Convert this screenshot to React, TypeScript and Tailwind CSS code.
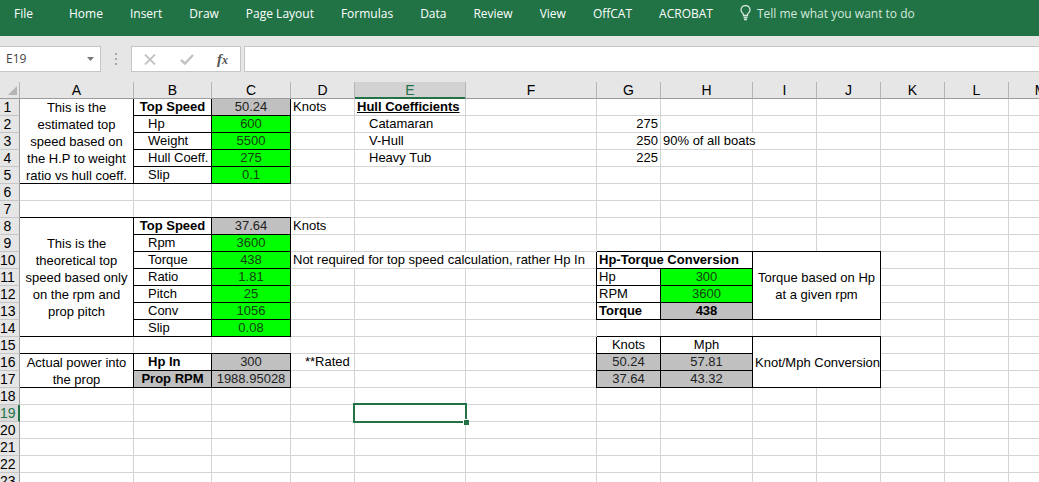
import { Fragment } from 'react';
import clsx from 'clsx';

type Cell = {
  v?: string;
  cls?: string;
  cols?: number;
  rows?: number;
};

const TABS = ['File', 'Home', 'Insert', 'Draw', 'Page Layout', 'Formulas', 'Data', 'Review', 'View', 'OffCAT', 'ACROBAT'];

const COLS = [
  { name: 'A', w: 'w-[114px]' },
  { name: 'B', w: 'w-[78px]' },
  { name: 'C', w: 'w-[79px]' },
  { name: 'D', w: 'w-[64px]' },
  { name: 'E', w: 'w-[111px]' },
  { name: 'F', w: 'w-[131px]' },
  { name: 'G', w: 'w-[64px]' },
  { name: 'H', w: 'w-[92px]' },
  { name: 'I', w: 'w-[64px]' },
  { name: 'J', w: 'w-[64px]' },
  { name: 'K', w: 'w-[64px]' },
  { name: 'L', w: 'w-[64px]' },
  { name: 'M', w: 'w-[64px]' },
];

const ROW_COUNT = 23;
const ACTIVE = { col: 'E', row: 19 };

const indent = 'pl-[14px]';
const center = 'text-center';
const bold = 'text-center font-bold';
const input = 'bg-[#00ff00] text-center text-[#14400f]';
const result = 'bg-[#c0c0c0] text-center text-[#222]';
const note = 'text-center whitespace-normal leading-[17px] align-middle';

const CELLS: Record<string, Cell> = {
  A1: { v: 'This is the estimated top speed based on the H.P to weight ratio vs hull coeff.', cls: note, rows: 5 },
  B1: { v: 'Top Speed', cls: bold },
  C1: { v: '50.24', cls: result },
  D1: { v: 'Knots' },
  E1: { v: 'Hull Coefficients', cls: 'font-bold underline' },
  B2: { v: 'Hp', cls: indent },
  C2: { v: '600', cls: input },
  E2: { v: 'Catamaran', cls: indent },
  G2: { v: '275', cls: 'text-right' },
  B3: { v: 'Weight', cls: indent },
  C3: { v: '5500', cls: input },
  E3: { v: 'V-Hull', cls: indent },
  G3: { v: '250', cls: 'text-right' },
  H3: { v: '90% of all boats', cols: 2 },
  B4: { v: 'Hull Coeff.', cls: indent },
  C4: { v: '275', cls: input },
  E4: { v: 'Heavy Tub', cls: indent },
  G4: { v: '225', cls: 'text-right' },
  B5: { v: 'Slip', cls: indent },
  C5: { v: '0.1', cls: input },

  A8: { v: 'This is the theoretical top speed based only on the rpm and prop pitch', cls: note, rows: 7 },
  B8: { v: 'Top Speed', cls: bold },
  C8: { v: '37.64', cls: result },
  D8: { v: 'Knots' },
  B9: { v: 'Rpm', cls: indent },
  C9: { v: '3600', cls: input },
  B10: { v: 'Torque', cls: indent },
  C10: { v: '438', cls: input },
  D10: { v: 'Not required for top speed calculation, rather Hp In', cols: 3 },
  B11: { v: 'Ratio', cls: indent },
  C11: { v: '1.81', cls: input },
  B12: { v: 'Pitch', cls: indent },
  C12: { v: '25', cls: input },
  B13: { v: 'Conv', cls: indent },
  C13: { v: '1056', cls: input },
  B14: { v: 'Slip', cls: indent },
  C14: { v: '0.08', cls: input },

  G10: { v: 'Hp-Torque Conversion', cls: 'font-bold', cols: 2 },
  I10: { v: 'Torque based on Hp at a given rpm', cls: note, cols: 2, rows: 4 },
  G11: { v: 'Hp' },
  H11: { v: '300', cls: input },
  G12: { v: 'RPM' },
  H12: { v: '3600', cls: input },
  G13: { v: 'Torque', cls: 'font-bold' },
  H13: { v: '438', cls: 'bg-[#c0c0c0] text-center font-bold' },

  G15: { v: 'Knots', cls: center },
  H15: { v: 'Mph', cls: center },
  I15: { v: 'Knot/Mph Conversion', cls: 'text-center align-middle', cols: 2, rows: 3 },
  G16: { v: '50.24', cls: result },
  H16: { v: '57.81', cls: result },
  G17: { v: '37.64', cls: result },
  H17: { v: '43.32', cls: result },

  A16: { v: 'Actual power into the prop', cls: note, rows: 2 },
  B16: { v: 'Hp In', cls: 'pl-[14px] font-bold' },
  C16: { v: '300', cls: result },
  D16: { v: '**Rated', cls: indent },
  B17: { v: 'Prop RPM', cls: 'bg-[#c0c0c0] text-center font-bold' },
  C17: { v: '1988.95028', cls: result },
};

// outlined blocks: every cell inside gets a black right and bottom edge
const BLOCKS = [
  { from: 'A', to: 'C', top: 1, bottom: 5 },
  { from: 'A', to: 'C', top: 8, bottom: 14 },
  { from: 'A', to: 'C', top: 16, bottom: 17 },
  { from: 'G', to: 'J', top: 10, bottom: 13 },
  { from: 'G', to: 'J', top: 15, bottom: 17 },
];

// inset shadows instead of borders, so black always wins in the corners
function edges(col: string, row: number, span: number) {
  const last = col.charCodeAt(0) + span - 1;
  let right = false;
  let bottom = false;
  for (const b of BLOCKS) {
    const inRows = row >= b.top && row <= b.bottom;
    const inCols = col >= b.from && col <= b.to;
    if (inRows && inCols) {
      right = true;
      bottom = true;
    }
    // neighbours draw the left and top edge of the block
    if (inRows && last + 1 === b.from.charCodeAt(0)) right = true;
    if (inCols && row + 1 === b.top) bottom = true;
  }
  if (right && bottom) return 'shadow-[inset_-1px_-1px_0_#000]';
  if (right) return 'shadow-[inset_-1px_0_0_#000,inset_0_-1px_0_#d4d4d4]';
  if (bottom) return 'shadow-[inset_0_-1px_0_#000,inset_-1px_0_0_#d4d4d4]';
  return 'shadow-[inset_-1px_-1px_0_#d4d4d4]';
}

// addresses swallowed by merged cells
const covered = new Set<string>();
Object.entries(CELLS).forEach(([addr, cell]) => {
  const c0 = addr.charCodeAt(0);
  const r0 = Number(addr.slice(1));
  for (let r = 0; r < (cell.rows ?? 1); r++) {
    for (let c = 0; c < (cell.cols ?? 1); c++) {
      if (r || c) covered.add(String.fromCharCode(c0 + c) + (r0 + r));
    }
  }
});

function Ribbon() {
  return (
    <nav className="flex h-9 items-start bg-[#217346] pt-[5px] pl-[14px] font-['Open_Sans',sans-serif] text-[12px] leading-[18px] whitespace-nowrap text-white">
      {TABS.map((tab) => (
        <button key={tab} type="button" className={tab === 'File' ? 'mr-9' : 'mr-[27px]'}>
          {tab}
        </button>
      ))}
      <button type="button" className="flex items-start gap-1.5 text-[#d5e8dc]">
        <svg width="11" height="16" viewBox="0 0 11 16" fill="none" stroke="currentColor" strokeWidth="1.3">
          <path d="M3.5 10.5V9.2C2 8 1 6.800 1 5a4.500 4.500 0 0 1 9 0c0 1.800-1 3-2.500 4.200v1.300zM3.500 12.500h4M4 14.500h3" />
        </svg>
        Tell me what you want to do
      </button>
    </nav>
  );
}

function FormulaBar() {
  return (
    <div className="flex h-9 items-end gap-[3px] bg-[#e6e6e6] font-['Open_Sans',sans-serif] text-[12px] text-[#444]">
      <div className="flex h-[26px] w-[101px] items-center border border-l-0 border-[#c6c6c6] bg-white">
        <input aria-label="Name Box" defaultValue="E19" className="w-0 flex-1 pl-1.5 outline-none" />
        <button type="button" aria-label="Open name list" className="px-1.5">
          <svg width="7" height="4" viewBox="0 0 7 4" fill="#777">
            <path d="M0 0h7L3.500 4z" />
          </svg>
        </button>
      </div>
      <div className="flex h-[26px] w-6 flex-col items-center justify-center gap-[3px]">
        <span className="size-[2px] bg-[#a6a6a6]" />
        <span className="size-[2px] bg-[#a6a6a6]" />
        <span className="size-[2px] bg-[#a6a6a6]" />
      </div>
      <div className="flex h-[26px] w-[110px] items-center justify-between border border-[#c6c6c6] bg-white px-3">
        <button type="button" aria-label="Cancel">
          <svg width="12" height="11" viewBox="0 0 12 11" stroke="#c2c2c2" strokeWidth="1.8">
            <path d="M1 .5l10 10M11 .5l-10 10" />
          </svg>
        </button>
        <button type="button" aria-label="Enter">
          <svg width="14" height="11" viewBox="0 0 14 11" fill="none" stroke="#c2c2c2" strokeWidth="2.400">
            <path d="M1 6l4 3.500L13 1" />
          </svg>
        </button>
        <button type="button" aria-label="Insert Function" className="font-['Liberation_Serif',serif] text-[15px] leading-4 font-bold text-[#555] italic">
          f<span className="text-[12px]">x</span>
        </button>
      </div>
      <input aria-label="Formula Bar" className="h-[26px] min-w-0 flex-1 border border-r-0 border-[#c6c6c6] bg-white px-1.5 outline-none" />
    </div>
  );
}

function Sheet() {
  return (
    <div className="overflow-hidden bg-[#e6e6e6] pt-[10px]">
      <table className="w-[1073px] table-fixed border-separate border-spacing-0 font-['Liberation_Sans',Arial,sans-serif] text-[13px] leading-4 whitespace-nowrap text-black">
        <colgroup>
          <col className="w-5" />
          {COLS.map((c) => (
            <col key={c.name} className={c.w} />
          ))}
        </colgroup>
        <thead>
          <tr className="h-[17px] text-[14px]">
            <td className="border-r border-b border-r-[#b5b5b5] border-b-[#9b9b9b] p-0">
              <svg className="ml-2" width="9" height="9" viewBox="0 0 9 9" fill="#b4b4b4">
                <path d="M9 0v9H0z" />
              </svg>
            </td>
            {COLS.map((c) => (
              <th
                key={c.name}
                scope="col"
                className={clsx(
                  'border-r border-b border-r-[#b5b5b5] p-0 font-normal',
                  c.name === ACTIVE.col
                    ? 'border-b-[#217346] bg-[#d2d2d2] text-[#217346] shadow-[inset_0_-1px_0_#217346]'
                    : 'border-b-[#9b9b9b]',
                )}
              >
                {c.name}
              </th>
            ))}
          </tr>
        </thead>
        <tbody>
          {Array.from({ length: ROW_COUNT }, (_, i) => i + 1).map((row) => (
            <tr key={row} className="h-[17px]">
              <th
                scope="row"
                className={clsx(
                  'border-b border-b-[#c6c6c6] p-0 text-[14px] font-normal',
                  row === ACTIVE.row
                    ? 'border-r-2 border-r-[#217346] bg-[#d9d9d9] pr-[3px] text-[#217346]'
                    : 'border-r border-r-[#9b9b9b] bg-[#e6e6e6] pr-1',
                )}
              >
                {row}
              </th>
              {COLS.map(({ name }) => {
                const addr = name + row;
                if (covered.has(addr)) return <Fragment key={addr} />;
                const cell = CELLS[addr] ?? {};
                const active = name === ACTIVE.col && row === ACTIVE.row;
                return (
                  <td
                    key={addr}
                    colSpan={cell.cols}
                    rowSpan={cell.rows}
                    className={clsx(
                      'pt-0 pr-[3px] pl-[2px]',
                      cell.rows ? 'pb-0' : 'pb-px',
                      edges(name, row, cell.cols ?? 1),
                      !cell.cls?.includes('bg-') && 'bg-white',
                      active && 'relative',
                      cell.cls,
                    )}
                  >
                    {cell.v}
                    {active && (
                      <span className="absolute -top-[2px] -right-px -bottom-px -left-[2px] border-2 border-[#217346]">
                        <span className="absolute -right-1 -bottom-1 size-[6px] border-t border-l border-white bg-[#217346]" />
                      </span>
                    )}
                  </td>
                );
              })}
            </tr>
          ))}
        </tbody>
      </table>
    </div>
  );
}

export default function App() {
  return (
    <div className="h-screen overflow-hidden bg-[#e6e6e6]">
      <Ribbon />
      <FormulaBar />
      <Sheet />
    </div>
  );
}
